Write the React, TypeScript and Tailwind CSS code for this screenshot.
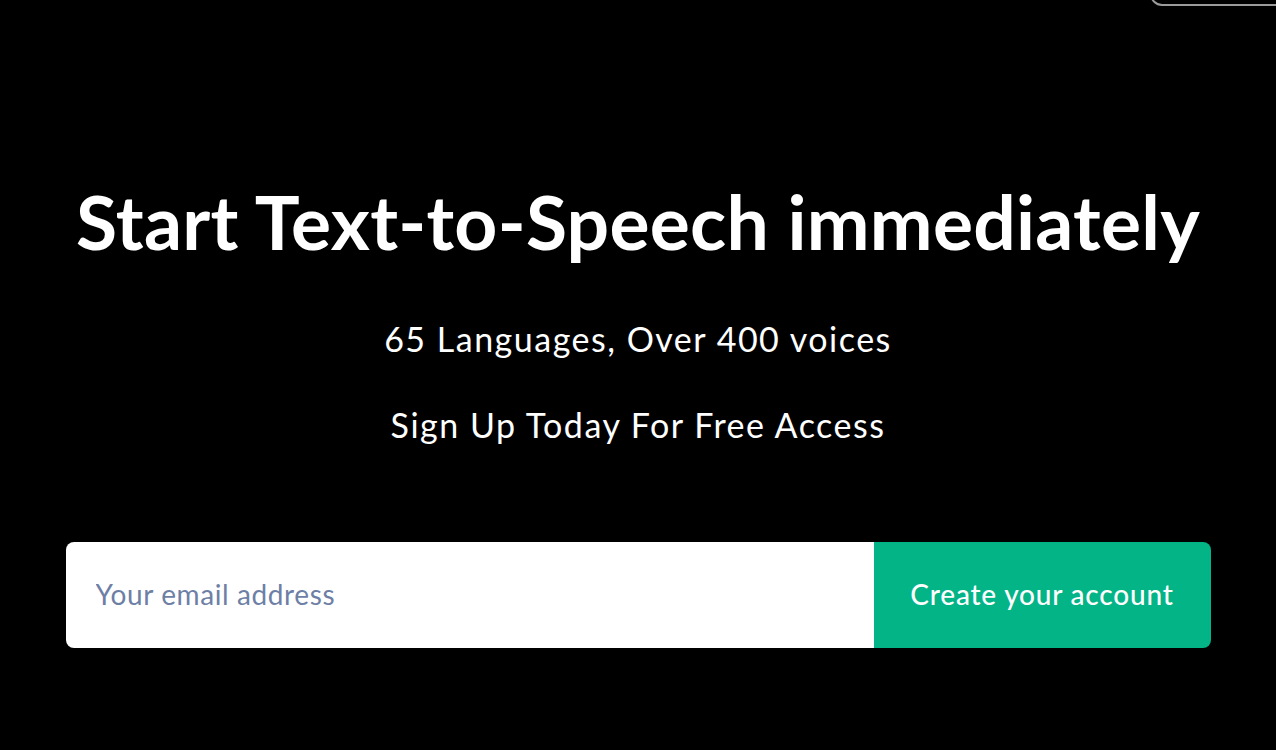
import { useState } from "react";

const App = () => {
  const [email, setEmail] = useState("");

  return (
    <div
      className="relative w-full h-[750px] bg-black overflow-hidden flex flex-col items-center"
      style={{ fontFamily: "Lato, 'Open Sans', sans-serif" }}
    >
      {/* Header button, cut off at the top edge */}
      <div className="absolute -top-[34px] left-[1150px] w-[160px] h-[40px] rounded-xl border-2 border-[#9a9a9a]" />

      <h1 className="mt-[177px] text-white font-bold text-[75px] leading-[88px] tracking-[0.25px]">
        Start Text-to-Speech immediately
      </h1>

      <p className="mt-[54px] text-white text-[34px] leading-[40px] tracking-[1.5px]">
        65 Languages, Over 400 voices
      </p>

      <p className="mt-[46px] text-white text-[34px] leading-[40px] tracking-[1.5px]">
        Sign Up Today For Free Access
      </p>

      {/* Signup form */}
      <form
        className="mt-[97px] w-[1145px] h-[106px] flex rounded-lg overflow-hidden"
        onSubmit={(e) => e.preventDefault()}
      >
        <input
          type="email"
          value={email}
          onChange={(e) => setEmail(e.target.value)}
          placeholder="Your email address"
          className="flex-1 h-full bg-white pl-[30px] pb-[3px] text-[28px] tracking-[0.6px] text-[#333] placeholder:text-[#6e7fa6] outline-none"
        />
        <button
          type="submit"
          className="w-[337px] h-full bg-[#03b487] pb-[3px] text-white text-[28px] tracking-[0.8px] font-medium"
        >
          Create your account
        </button>
      </form>
    </div>
  );
};

export default App;
